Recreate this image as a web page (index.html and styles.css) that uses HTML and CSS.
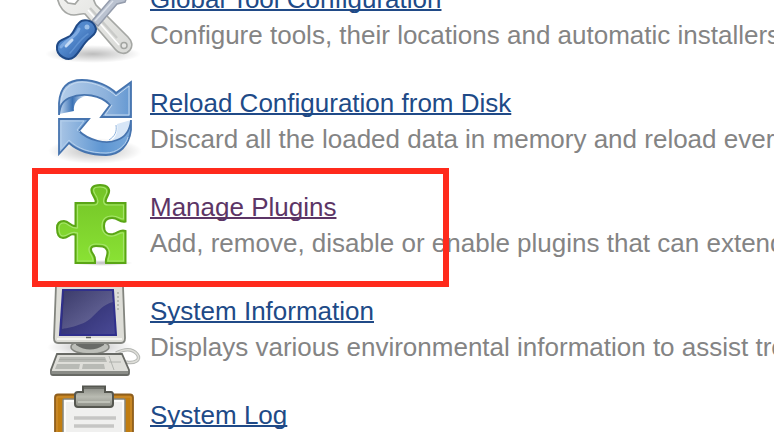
FILE: index.html
```html
<!DOCTYPE html>
<html lang="en">
<head>
<meta charset="utf-8">
<title>Manage Jenkins</title>
<link rel="stylesheet" href="styles.css">
</head>
<body>
<main class="list">
  <section class="item">
    <svg class="icon" viewBox="40 -36 110 104" aria-hidden="true">
      <defs>
        <linearGradient id="steel" x1="0" y1="0" x2="1" y2="1"><stop offset="0" stop-color="#f2f2f0"/><stop offset="1" stop-color="#d8d9d6"/></linearGradient>
        <linearGradient id="handle" x1="0" y1="0" x2="1" y2="1"><stop offset="0" stop-color="#4c83c9"/><stop offset=".45" stop-color="#5288cc"/><stop offset="1" stop-color="#23519a"/></linearGradient>
        <radialGradient id="shadow"><stop offset="0" stop-color="#000" stop-opacity=".26"/><stop offset="1" stop-color="#000" stop-opacity="0"/></radialGradient>
      </defs>
      <ellipse cx="93" cy="54" rx="48" ry="9" fill="url(#shadow)"/>
      <path d="M57-5C58 7 65 15 74 15C79 15 82 13 85 14L115 49C119 54 126 55 130 50C133 46 132 41 128 37L96 5C94 2 93-3 91-8L79-10L80-2L75 4L68 3L60-5Z" fill="url(#steel)" stroke="#a5a7a4" stroke-width="1.7"/>
      <path d="M88 10L119 45" fill="none" stroke="#fff" stroke-width="1.5"/>
      <path d="M90 8L117 38" fill="none" stroke="#c9cac8" stroke-width="2.500"/>
      <circle cx="124" cy="45.500" r="3" fill="#e6e6e4" stroke="#a3a5a1" stroke-width="1.500"/>
      <path d="M92 21L110 0L117-8H129L125 2L117 4L98 26Z" fill="#bac2d0" stroke="#949cac" stroke-width="1.5"/>
      <path d="M95 21L113 1" stroke="#dce1ea" stroke-width="1.500"/>
      <path d="M79 23C83 18 92 20 95 26C98 31 94 35 90 38C83 43 80 52 74 57C68 62 56 56 57 47C57 40 65 39 70 36C75 32 75 26 79 23Z" fill="url(#handle)" stroke="#204a87" stroke-width="2"/>
      <path d="M79 29C76 38 65 40 61 47" fill="none" stroke="#7fabe2" stroke-width="3" stroke-linecap="round"/>
      <path d="M72 40L66 46" fill="none" stroke="#c5dbf5" stroke-width="3" stroke-linecap="round"/>
      <path d="M88 34C80 39 75 48 70 53" fill="none" stroke="#5f92d2" stroke-width="1.500" stroke-linecap="round"/>
      <circle cx="87" cy="27" r="2.500" fill="#9bbfe9"/>
    </svg>
    <div class="text">
      <a class="link" href="#">Global Tool Configuration</a>
      <p class="desc">Configure tools, their locations and automatic installers.</p>
    </div>
  </section>
  <section class="item">
    <svg class="icon" viewBox="40 68 110 104" aria-hidden="true">
      <defs>
        <linearGradient id="arrowTop"><stop offset="0" stop-color="#b4cdea"/><stop offset=".65" stop-color="#8db2dc"/><stop offset="1" stop-color="#6498d2"/></linearGradient>
        <linearGradient id="arrowLow"><stop offset="0" stop-color="#a9c5e5"/><stop offset=".6" stop-color="#5e96d2"/><stop offset="1" stop-color="#78a8db"/></linearGradient>
        <linearGradient id="tail" x1="0" y1="0" x2="1" y2="0"><stop offset="0" stop-color="#c5daf2"/><stop offset=".5" stop-color="#3b72b5"/><stop offset="1" stop-color="#e8f1fb"/></linearGradient>
      </defs>
      <ellipse cx="95" cy="151" rx="47" ry="13" fill="url(#shadow)"/>
      <path d="M60 103C66 95 76 94 86 96C77 98 73 104 74 111L59 114Z" fill="url(#tail)"/>
      <path d="M59 115V103C60 88 68 80 82 80C96 80 109 86 116 93L131 82V117H101L110 105C101 95 83 92 69 98C61 102 60 107 59 115Z" fill="url(#arrowTop)" stroke="#4674af" stroke-width="1.800"/>
      <path d="M61 103C62 89 71 82 82 82C95 82 109 89 116 96L129 86V115H105L112 105" fill="none" stroke="#c6daf0" stroke-width="1"/>
      <path d="M112 140C117 136 118 130 117 124L131 120V129C128 137 121 141 112 142Z" fill="#d7e6f7"/>
      <path d="M116 125C117 132 115 136 109 140" fill="none" stroke="#8fb4de" stroke-width="1"/>
      <path d="M131 120V130C129 146 119 155 106 155C90 155 78 151 69 143L59 154V119H89L79 131C88 140 106 145 117 140C126 137 130 130 131 120Z" fill="url(#arrowLow)" stroke="#4674af" stroke-width="1.800"/>
      <path d="M80 132L77 130L84 121H61V149L69 140C78 149 90 153 106 153C116 153 126 146 128 137" fill="none" stroke="#b4cfec" stroke-width="1"/>
    </svg>
    <div class="text">
      <a class="link" href="#">Reload Configuration from Disk</a>
      <p class="desc">Discard all the loaded data in memory and reload everything from file system.</p>
    </div>
  </section>
  <section class="item">
    <svg class="icon" viewBox="40 172 110 104" aria-hidden="true">
      <defs><linearGradient id="green" x1="0" y1="0" x2="0" y2="1"><stop offset="0" stop-color="#73c326"/><stop offset="1" stop-color="#8ae234"/></linearGradient></defs>
      <ellipse cx="103" cy="263" rx="30" ry="3" fill="url(#shadow)"/>
      <path d="M75.500 203H93C98 203 95 199 93 195C89 188 93 185 100 185C108 185 111 189 108 195C106 199 104 203 108 203H125.500V221.500C119 223 119 218 112 218C106 218 104 221 104 226C104 232 107 235 113 234C118 233 120 229 125.500 231V263H106C105 257 109 255 107 250C105 246 101 246 96 246C90 246 90 250 93 254C96 258 95 260 95 263H75.500V235C70 232 69 238 63 238C58 238 57 233 57 228C57 223 59 221 64 221C69 221 71 227 75.500 226Z" fill="url(#green)" stroke="#5aa516" stroke-width="2"/>
      <path d="M77.500 205H94C100 205 98 198 95 194C92 189 94 187 100 187C106 187 108 190 106 194C103 199 102 205 108 205H123.500V219C119 219 119 216 112 216C105 216 102 220 102 226C102 233 107 237 113 236C118 235 120 232 123.500 233V261H108C108 257 111 254 109 250C107 244 102 244 96 244C89 244 87 249 91 255C93 258 93 261 93 261H77.500V233C70 230 69 236 63 236C60 236 59 233 59 228C59 224 61 223 64 223C68 223 71 229 77.500 228Z" fill="none" stroke="#a5e36b" stroke-width="1.200"/>
    </svg>
    <div class="text">
      <a class="link visited" href="#">Manage Plugins</a>
      <p class="desc">Add, remove, disable or enable plugins that can extend the functionality of Jenkins.</p>
    </div>
    <div class="highlight"></div>
  </section>
  <section class="item">
    <svg class="icon" viewBox="40 276 110 104" aria-hidden="true">
      <defs>
        <linearGradient id="screen" x1="0" y1="0" x2="1" y2="1"><stop offset="0" stop-color="#24245f"/><stop offset="1" stop-color="#4a4a96"/></linearGradient>
        <linearGradient id="glare" x1="0" y1="0" x2="1" y2="1"><stop offset="0" stop-color="#44446f"/><stop offset="1" stop-color="#8080ab"/></linearGradient>
      </defs>
      <ellipse cx="90" cy="347" rx="43" ry="10" fill="url(#shadow)"/>
      <path d="M116 353C124 349 132 348 137 354C142 360 134 364 126 362" fill="none" stroke="#b4b6b3" stroke-width="3.500"/>
      <path d="M116 353C124 349 132 348 137 354C142 360 134 364 126 362" fill="none" stroke="#deded9" stroke-width="1.500"/>
      <ellipse cx="90" cy="347" rx="19" ry="7" fill="#bcbeb8" stroke="#83857f" stroke-width="1.500"/>
      <path d="M76 345Q90 354 104 345V341H76Z" fill="#696b67"/>
      <path d="M59 282H120Q123 282 123 286L125 338Q125 343 121 343H58Q54 343 54 338L56 285Q56 282 59 282Z" fill="#deded8" stroke="#83857f" stroke-width="1.800"/>
      <path d="M57 339H122" stroke="#f4f4ef" stroke-width="2"/>
      <path d="M63 290H113L116 335H60Z" fill="url(#screen)"/>
      <path d="M64 291H112L113 302C99 305 93 321 81 324C73 327 68 328 62 329Z" fill="url(#glare)" opacity=".72"/>
      <path d="M63 290H113L116 335H60Z" fill="none" stroke="#30308c" stroke-width="2"/>
      <path d="M118 292V310" stroke="#b9bbb3" stroke-width="2" stroke-dasharray="2 2"/>
      <path d="M86 337.500H91" stroke="#5f615b" stroke-width="1.500"/>
      <path d="M57 354H122L129 370V373Q129 375 127 375H53Q51 375 51 373V370Z" fill="#deded9" stroke="#686a65" stroke-width="1.800"/>
      <path d="M51.500 371H128V374H51.500Z" fill="#8a8c87"/>
      <path d="M60 357H105L107 362H58ZM57 364H80L79 369H55ZM83 364H104L105 369H82Z" fill="#b8bab5"/>
      <path d="M59 359.500H105M109 356L114 370M109 362H121" stroke="#a6a8a3" stroke-width=".8"/>
    </svg>
    <div class="text">
      <a class="link" href="#">System Information</a>
      <p class="desc">Displays various environmental information to assist trouble-shooting.</p>
    </div>
  </section>
  <section class="item">
    <svg class="icon" viewBox="40 380 110 104" aria-hidden="true">
      <defs><linearGradient id="clip" x1="0" y1="0" x2="0" y2="1"><stop offset="0" stop-color="#888a83"/><stop offset=".5" stop-color="#b9bbb2"/><stop offset="1" stop-color="#8b8d85"/></linearGradient></defs>
      <rect x="55" y="394.500" width="78" height="86" rx="3" fill="#c17d11" stroke="#8f5f1e" stroke-width="1.800"/>
      <path d="M57 478V397H131V478" fill="none" stroke="#cf923a" stroke-width="1"/>
      <rect x="63" y="399" width="62" height="80" rx="1" fill="#f0f0ef" stroke="#85867f" stroke-width="1.500"/>
      <path d="M65 478V401H123V478" fill="none" stroke="#fff" stroke-width="1.500"/>
      <path d="M74 418H116M74 426H114M74 434H116" stroke="#c6c6c5" stroke-width="3.500"/>
      <path d="M83 386.500H105V392H111Q113 392 113 395V404Q113 407 110 407H78Q75 407 75 404V395Q75 392 78 392H83Z" fill="url(#clip)" stroke="#555750" stroke-width="2"/>
      <path d="M84 388H104" stroke="#6d6f68" stroke-width="2"/>
      <path d="M78 402H110" stroke="#c9cbc2" stroke-width="1.500"/>
    </svg>
    <div class="text">
      <a class="link" href="#">System Log</a>
    </div>
  </section>
</main>
</body>
</html>
```
FILE: styles.css
```css
html, body { margin: 0; height: 100%; overflow: hidden; background: #fff; }
body { font: 26px/36px "Liberation Sans", Arial, sans-serif; }
.list { display: flex; flex-direction: column; margin-top: -36px; padding-left: 40px; }
.item { position: relative; display: flex; flex: none; height: 104px; }
.icon { flex: none; width: 110px; height: 104px; }
.text { padding-top: 17px; white-space: nowrap; }
.link { display: block; width: max-content; color: #204a87; text-decoration: underline; text-decoration-thickness: 2px; text-underline-offset: 1px; text-decoration-skip-ink: none; }
.visited { color: #5c3566; }
.desc { margin: 0; color: #848484; }
.highlight { position: absolute; left: -8px; top: -4px; box-sizing: border-box; width: 417px; height: 119px; border: 6px solid #ff2a1c; z-index: 1; }
```
